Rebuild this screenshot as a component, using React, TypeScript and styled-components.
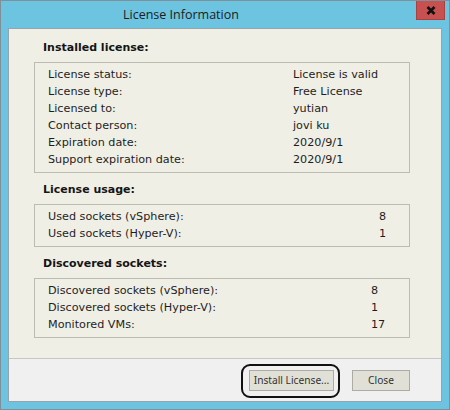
import * as React from 'react';
import styled, { createGlobalStyle } from 'styled-components';

const GlobalStyle = createGlobalStyle`
  html, body {
    margin: 0;
    padding: 0;
    background: #ffffff;
  }
  body {
    font-family: "DejaVu Sans", Verdana, sans-serif;
  }
`;

const Window = styled.div`
  width: 450px;
  height: 410px;
  box-sizing: border-box;
  display: flex;
  flex-direction: column;
  padding: 0 7px 7px 7px;
  border: 1px solid #7f9099;
  background: #6cc4e0;
`;

const TitleBar = styled.div`
  height: 27px;
  flex: none;
  display: flex;
  align-items: center;
  padding-left: 115px;
`;

const Title = styled.span`
  font-family: "Open Sans", "Noto Sans", sans-serif;
  font-size: 12.5px;
  color: #1d1d1d;
`;

const CloseButton = styled.div`
  align-self: flex-start;
  margin-left: auto;
  margin-right: -3px;
  width: 29px;
  height: 19px;
  box-sizing: border-box;
  display: flex;
  align-items: center;
  justify-content: center;
  background: #c75150;
  border: 1px solid #a84140;
  border-top: none;
`;

const Dialog = styled.div`
  flex: 1;
  display: flex;
  flex-direction: column;
  border: 1px solid #97a4ab;
  background: #f0efe6;
`;

const Main = styled.div`
  flex: 1;
  padding: 10px 31px 0 25px;
`;

const Section = styled.section`
  & + & {
    margin-top: 8px;
  }
`;

const SectionTitle = styled.div`
  font-size: 11px;
  font-weight: bold;
  line-height: 17px;
  color: #151515;
  padding-left: 9px;
  margin-bottom: 6px;
`;

const InfoBox = styled.div<{ $labelWidth: number }>`
  display: grid;
  grid-template-columns: ${p => p.$labelWidth}px 1fr;
  border: 1px solid #bcbcb3;
  padding: 3px 13px 4px;
  font-size: 11.2px;
  line-height: 17px;
  color: #1e1e1e;
`;

const Footer = styled.div`
  height: 43px;
  flex: none;
  box-sizing: border-box;
  display: flex;
  align-items: center;
  justify-content: flex-end;
  gap: 18px;
  padding-right: 31px;
  border-top: 1px solid #c6c6c6;
  background: #f0f0f0;
`;

const Highlight = styled.div`
  position: relative;
  display: flex;

  &::before {
    content: '';
    position: absolute;
    inset: -6px -6px -7px -8px;
    border: 2px solid #111111;
    border-radius: 9px;
    pointer-events: none;
  }
`;

const Button = styled.button<{ $width: number }>`
  width: ${p => p.$width}px;
  height: 21px;
  padding: 0;
  border: 1px solid #acaca4;
  background: #e0e0d6;
  font-family: "Noto Sans", "Open Sans", sans-serif;
  font-size: 10.2px;
  color: #333333;
`;

const installed = [
  ['License status:', 'License is valid'],
  ['License type:', 'Free License'],
  ['Licensed to:', 'yutian'],
  ['Contact person:', 'jovi ku'],
  ['Expiration date:', '2020/9/1'],
  ['Support expiration date:', '2020/9/1'],
];

const usage = [
  ['Used sockets (vSphere):', '8'],
  ['Used sockets (Hyper-V):', '1'],
];

const discovered = [
  ['Discovered sockets (vSphere):', '8'],
  ['Discovered sockets (Hyper-V):', '1'],
  ['Monitored VMs:', '17'],
];

const InfoSection = ({ title, rows, labelWidth }: { title: string; rows: string[][]; labelWidth: number }) => (
  <Section>
    <SectionTitle>{title}</SectionTitle>
    <InfoBox $labelWidth={labelWidth}>
      {rows.map(([label, value]) => (
        <React.Fragment key={label}>
          <span>{label}</span>
          <span>{value}</span>
        </React.Fragment>
      ))}
    </InfoBox>
  </Section>
);

export default function App() {
  return (
    <>
      <GlobalStyle />
      <Window>
        <TitleBar>
          <Title>License Information</Title>
          <CloseButton>
            <svg width="10" height="9" viewBox="0 0 10 9">
              <path d="M1.5 1 L8.5 8 M8.5 1 L1.5 8" stroke="#111" strokeWidth="2.6" />
            </svg>
          </CloseButton>
        </TitleBar>
        <Dialog>
          <Main>
            <InfoSection title="Installed license:" rows={installed} labelWidth={245} />
            <InfoSection title="License usage:" rows={usage} labelWidth={331} />
            <InfoSection title="Discovered sockets:" rows={discovered} labelWidth={323} />
          </Main>
          <Footer>
            <Highlight>
              <Button $width={85}>Install License...</Button>
            </Highlight>
            <Button $width={58}>Close</Button>
          </Footer>
        </Dialog>
      </Window>
    </>
  );
}
